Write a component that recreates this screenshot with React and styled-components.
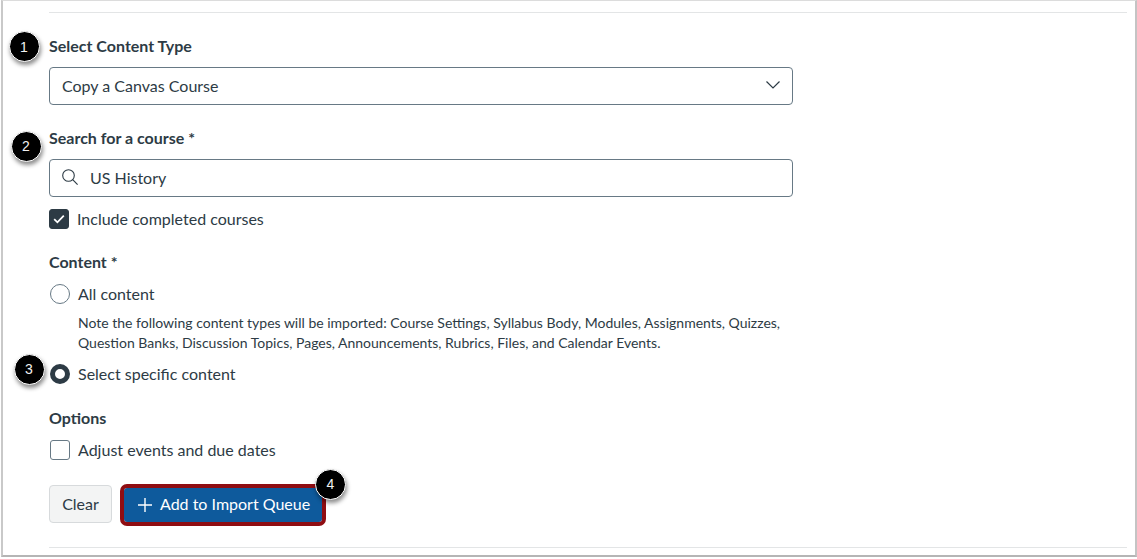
import styled, { createGlobalStyle } from "styled-components";

const Global = createGlobalStyle`
  html, body { margin: 0; padding: 0; background: #fff; }
  body { font-family: Lato, "Liberation Sans", sans-serif; color: #2d3b45; }
`;

const Frame = styled.div`
  position: relative;
  box-sizing: border-box;
  width: 1136px;
  height: 557px;
  margin-left: 1px;
  background: #fff;
  border: 1px solid #dcdcdc;
  border-left: 2px solid #c9c9c9;
  border-right: 2px solid #c4c4c4;
  border-bottom: 2px solid #b5b5b5;
  padding: 11px 8px 0 46px;
  display: flex;
  flex-direction: column;
`;

const Rule = styled.hr`
  margin: ${(p) => p.$top || 0}px 0 0;
  border: 0;
  height: 1px;
  background: #e3e5e6;
`;

const Label = styled.div`
  font-size: 16px;
  line-height: 20px;
  font-weight: 700;
  margin-top: ${(p) => p.$top}px;
`;

const Field = styled.div`
  box-sizing: border-box;
  width: 744px;
  height: 38px;
  margin-top: 11px;
  border: 1px solid #677985;
  border-radius: 4px;
  display: flex;
  align-items: center;
  justify-content: space-between;
  padding: 0 12px 2px;
  font-size: 16px;
  color: #2d3b45;
`;

const SearchText = styled.span`
  display: flex;
  align-items: center;
  gap: 12px;
`;

const Row = styled.div`
  display: flex;
  align-items: center;
  height: 20px;
  gap: 8px;
  margin-top: ${(p) => p.$top}px;
  font-size: 16px;
`;

const RowText = styled.span`
  padding-bottom: 2px;
`;

const Box = styled.span`
  box-sizing: border-box;
  width: 20px;
  height: 20px;
  margin-left: ${(p) => (p.$checked ? 0 : 1)}px;
  border-radius: 3px;
  border: 1px solid ${(p) => (p.$checked ? "#2d3b45" : "#677985")};
  background: ${(p) => (p.$checked ? "#2d3b45" : "#fff")};
  display: flex;
  align-items: center;
  justify-content: center;
  flex: none;
`;

const Radio = styled.span`
  box-sizing: border-box;
  width: 20px;
  height: 20px;
  border-radius: 50%;
  flex: none;
  background: #fff;
  border: ${(p) => (p.$checked ? "5px solid #2d3b45" : "1px solid #677985")};
  margin-left: 1px;
`;

const Note = styled.p`
  margin: 9px 0 0 29px;
  width: 730px;
  font-size: 14px;
  line-height: 20px;
`;

const Buttons = styled.div`
  display: flex;
  align-items: center;
  gap: 12px;
  height: 38px;
  margin-top: 25px;
`;

const ClearButton = styled.button`
  box-sizing: border-box;
  height: 38px;
  width: 63px;
  padding: 0 0 2px;
  border: 1px solid #d7dadc;
  border-radius: 4px;
  background: #f3f4f4;
  color: #2d3b45;
  font: 16px Lato, sans-serif;
`;

const AddButton = styled.button`
  box-sizing: border-box;
  height: 34px;
  width: 198px;
  margin-top: 2px;
  padding: 0 0 4px 14px;
  border: 0;
  border-radius: 3px;
  background: #0e5a9c;
  color: #fff;
  font: 16px Lato, sans-serif;
  display: flex;
  align-items: center;
  gap: 8px;
  outline: 4px solid #8f0d12;
  outline-offset: 0;
  svg {
    margin-top: 3px;
  }
`;

const Badge = styled.span`
  position: absolute;
  left: ${(p) => p.$x - 18.5}px;
  top: ${(p) => p.$y - 16.5}px;
  box-sizing: border-box;
  width: 31px;
  height: 31px;
  border-radius: 50%;
  background: #000;
  border: 1px solid #fff;
  box-shadow: 1px 3px 4px rgba(0, 0, 0, 0.45);
  color: #f2f2f2;
  font: 14px "Liberation Sans", sans-serif;
  display: flex;
  align-items: center;
  justify-content: center;
`;

export default function App() {
  return (
    <>
      <Global />
      <Frame>
        <Rule />
        <Label $top={23}>Select Content Type</Label>
        <Field>
          Copy a Canvas Course
          <svg width="14" height="8" viewBox="0 0 14 8">
            <path d="M.5.5 7 7 13.5.5" fill="none" stroke="#2d3b45" strokeWidth="1.2" />
          </svg>
        </Field>
        <Label $top={23}>Search for a course *</Label>
        <Field>
          <SearchText>
            <svg width="16" height="16" viewBox="0 0 16 16">
              <circle cx="6.5" cy="6.5" r="5.8" fill="none" stroke="#2d3b45" strokeWidth="1.1" />
              <path d="M10.7 10.7 15.6 15.6" stroke="#2d3b45" strokeWidth="1.2" />
            </svg>
            US History
          </SearchText>
        </Field>
        <Row $top={12}>
          <Box $checked>
            <svg width="12" height="10" viewBox="0 0 12 10">
              <path d="M1.2 5.2 4.4 8.3 10.8 1.6" fill="none" stroke="#fff" strokeWidth="1.8" />
            </svg>
          </Box>
          <RowText>Include completed courses</RowText>
        </Row>
        <Label $top={23}>Content *</Label>
        <Row $top={12}>
          <Radio />
          <RowText>All content</RowText>
        </Row>
        <Note>
          Note the following content types will be imported: Course Settings, Syllabus Body, Modules, Assignments, Quizzes,
          Question Banks, Discussion Topics, Pages, Announcements, Rubrics, Files, and Calendar Events.
        </Note>
        <Row $top={11}>
          <Radio $checked />
          <RowText>Select specific content</RowText>
        </Row>
        <Label $top={24}>Options</Label>
        <Row $top={12}>
          <Box />
          <RowText>Adjust events and due dates</RowText>
        </Row>
        <Buttons>
          <ClearButton>Clear</ClearButton>
          <AddButton>
            <svg width="14" height="14" viewBox="0 0 14 14">
              <path d="M7 0v14M0 7h14" stroke="#fff" strokeWidth="1.4" />
            </svg>
            Add to Import Queue
          </AddButton>
        </Buttons>
        <Rule $top={24} />
        <Badge $x={24} $y={46.5}>1</Badge>
        <Badge $x={26} $y={146}>2</Badge>
        <Badge $x={29} $y={369}>3</Badge>
        <Badge $x={330.5} $y={484}>4</Badge>
      </Frame>
    </>
  );
}
